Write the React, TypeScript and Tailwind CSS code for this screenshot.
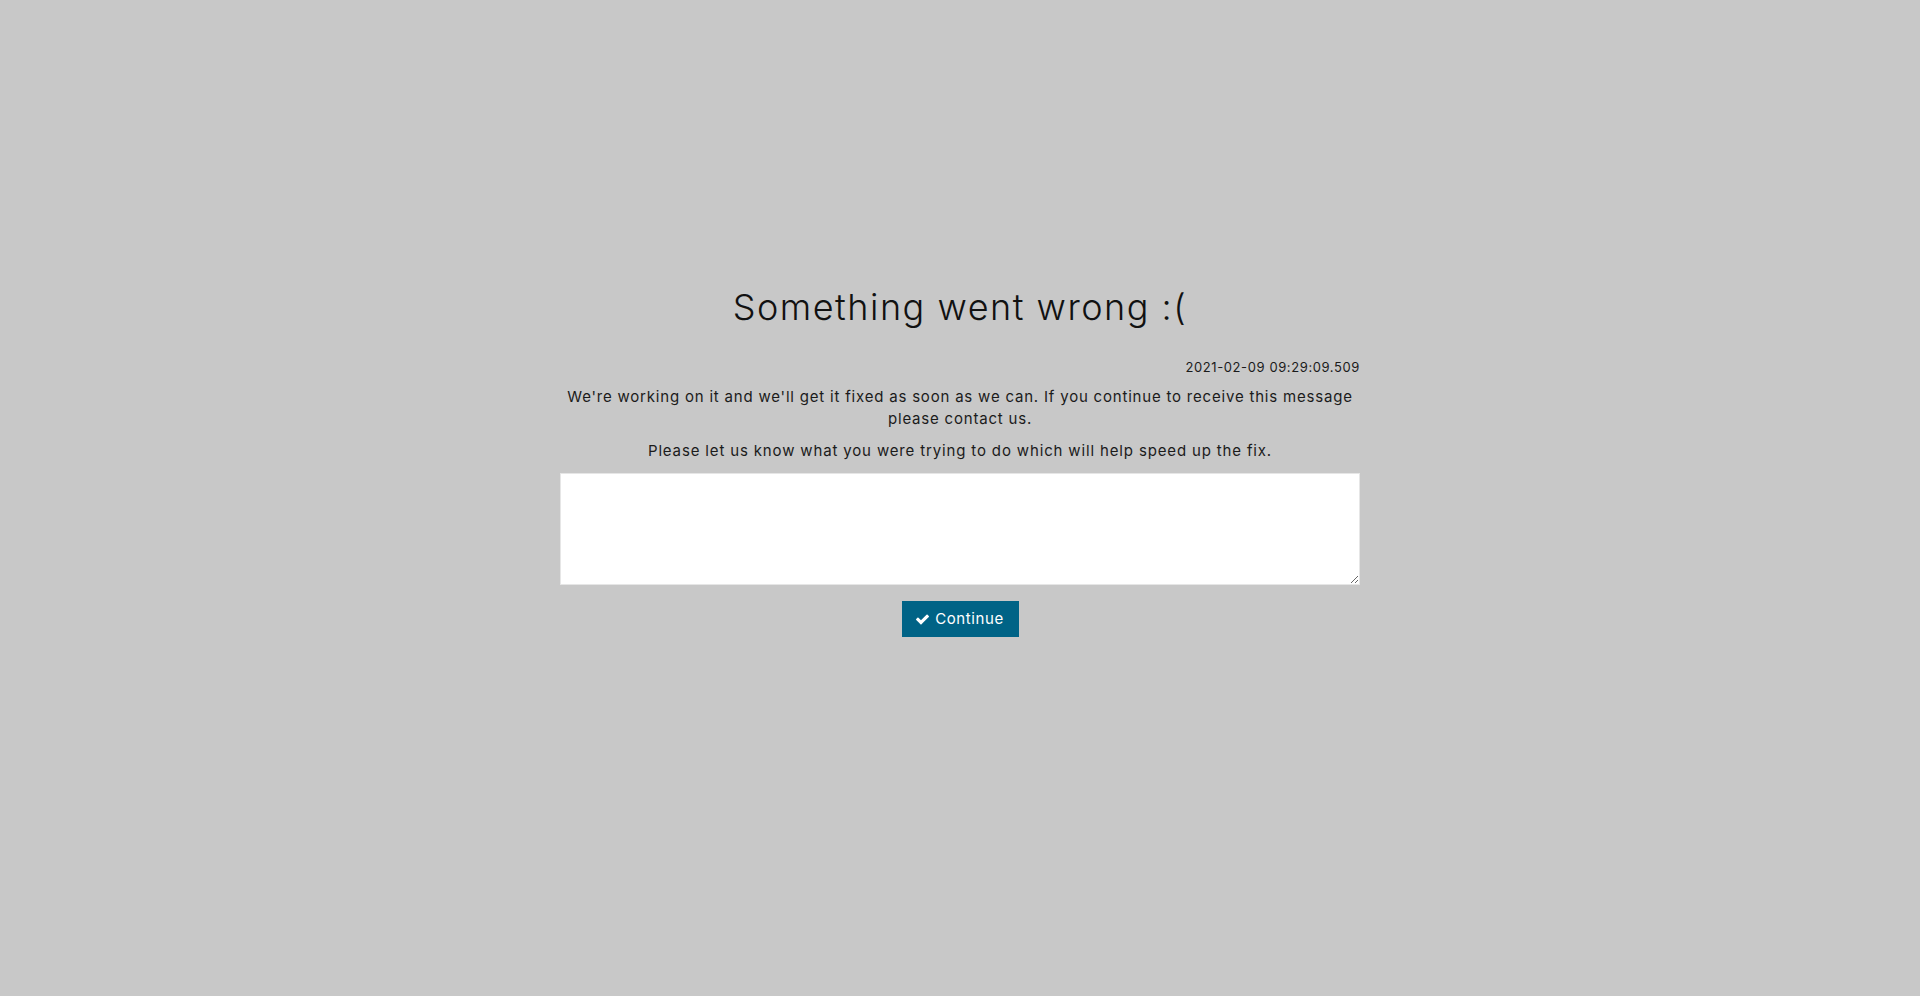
import React from "react";

export default function App() {
  return (
    <div className="w-full h-[996px] bg-[#c8c8c8] text-[#1b1b1b]" style={{ fontFamily: "Inter, 'Noto Sans', sans-serif" }}>
      <div className="w-[800px] mx-auto pt-[287px] flex flex-col items-center">
        <h1 className="text-[36px] leading-[40px] font-light text-[#111] tracking-[1.5px]">Something went wrong :(</h1>
        <div className="w-full text-right text-[13px] leading-[18px] mt-[31px] tracking-[0.6px]">2021-02-09 09:29:09.509</div>
        <p className="text-center text-[15px] leading-[22px] mt-[10px] tracking-[0.8px]">
          We're working on it and we'll get it fixed as soon as we can. If you continue to receive this message please contact us.
        </p>
        <p className="text-center text-[15px] leading-[22px] mt-[10px] tracking-[0.85px]">
          Please let us know what you were trying to do which will help speed up the fix.
        </p>
        <textarea className="mt-[11px] w-full h-[112px] bg-white border border-[#e6e6e6] outline-none p-2 text-[14px]" />
        <button className="mt-[16px] h-[36px] w-[117px] bg-[#006386] text-white text-[15px] tracking-[0.6px] flex items-center justify-center gap-[6px]">
          <svg width="13" height="11" viewBox="0 0 1550 1188" fill="white">
            <path d="M1550 232q0 40-28 68l-724 724-136 136q-28 28-68 28t-68-28l-136-136-362-362q-28-28-28-68t28-68l136-136q28-28 68-28t68 28l294 295 656-657q28-28 68-28t68 28l136 136q28 28 28 68z" />
          </svg>
          Continue
        </button>
      </div>
    </div>
  );
}
